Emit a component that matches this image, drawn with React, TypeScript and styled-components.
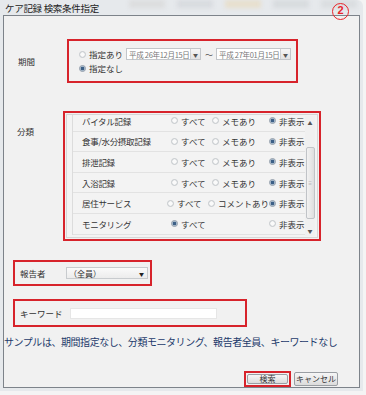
import styled, { createGlobalStyle } from "styled-components"

const GlobalStyle = createGlobalStyle`
  html, body {
    margin: 0;
    padding: 0;
    background: #f4f4f4;
  }
  body {
    font-family: "Noto Sans CJK JP", "Noto Sans", sans-serif;
  }
`

const Window = styled.div`
  width: 363px;
  height: 391px;
  box-sizing: border-box;
  padding: 0 3px 3px 3px;
  background: #e6e9ec;
  border-radius: 0 6px 0 0;
  display: flex;
  flex-direction: column;
`

const TitleBar = styled.div`
  height: 18px;
  display: flex;
  align-items: center;
  position: relative;
`

const Title = styled.div`
  font-size: 9.5px;
  color: #222;
  padding-left: 2px;
  white-space: nowrap;
  letter-spacing: -0.3px;
`

const Tabs = styled.div`
  display: flex;
  gap: 12px;
  margin-left: 30px;
  align-self: flex-start;
  height: 8px;
  overflow: hidden;
  filter: blur(2px);
`

const Tab = styled.div<{ $tone: string }>`
  width: 36px;
  height: 8px;
  background: ${(p) => p.$tone};
  opacity: 0.7;
`

const Badge = styled.div`
  position: absolute;
  right: 11px;
  top: 3px;
  width: 17px;
  height: 17px;
  box-sizing: border-box;
  border: 1.8px solid #e8242a;
  border-radius: 50%;
  color: #e8242a;
  font-family: "Liberation Sans", sans-serif;
  font-weight: bold;
  font-size: 11px;
  line-height: 13.5px;
  text-align: center;
  z-index: 1;
`

const Client = styled.div`
  flex: 1;
  background: #f1f1f1;
  border: 1px solid #7d838a;
  display: flex;
  flex-direction: column;
`

const Row = styled.div<{ $top: number; $align?: string }>`
  display: flex;
  align-items: ${(p) => p.$align || "center"};
  margin-top: ${(p) => p.$top}px;
`

const SideLabel = styled.div<{ $w: number; $pad: number; $pt?: number }>`
  width: ${(p) => p.$w}px;
  padding-left: ${(p) => p.$pad}px;
  padding-top: ${(p) => p.$pt || 0}px;
  box-sizing: border-box;
  font-size: 8.5px;
  color: #333;
  flex-shrink: 0;
`

const RedBox = styled.div<{ $w: number; $h: number }>`
  width: ${(p) => p.$w}px;
  height: ${(p) => p.$h}px;
  box-sizing: border-box;
  border: 2px solid #d7232b;
  display: flex;
`

const PeriodBox = styled(RedBox)`
  flex-direction: column;
  justify-content: center;
  padding-left: 10px;
  gap: 2px;
`

const Line = styled.div`
  display: flex;
  align-items: center;
  height: 12px;
`

const Radio = styled.span<{ $on?: boolean }>`
  width: 7px;
  height: 7px;
  border-radius: 50%;
  box-sizing: border-box;
  border: 1px solid ${(p) => (p.$on ? "#8e9aa8" : "#c4c8cc")};
  background: ${(p) =>
    p.$on
      ? "radial-gradient(circle, #3c5f86 0 1.6px, #9fb4c8 2px, #e6ebf0 3px)"
      : "radial-gradient(circle, #fafafa 0 1.5px, #e2e4e6 3px)"};
  flex-shrink: 0;
`

const Choice = styled.label<{ $w?: number }>`
  display: flex;
  align-items: center;
  gap: 3px;
  width: ${(p) => (p.$w ? `${p.$w}px` : "auto")};
  font-size: 8.5px;
  color: #333;
  white-space: nowrap;
  flex-shrink: 0;
`

const Combo = styled.div<{ $w: number; $ml?: number }>`
  width: ${(p) => p.$w}px;
  margin-left: ${(p) => p.$ml || 0}px;
  height: 12px;
  box-sizing: border-box;
  border: 1px solid #c3c6ca;
  background: #fff;
  display: flex;
  align-items: center;
  font-size: 7.5px;
  color: #777;
  padding-left: 2px;
  white-space: nowrap;
  flex-shrink: 0;
`

const ComboText = styled.span`
  flex: 1;
  overflow: hidden;
  letter-spacing: -0.3px;
`

const ComboArrow = styled.span`
  width: 9px;
  height: 10px;
  border-left: 1px solid #cfd2d5;
  background: linear-gradient(#f6f6f6, #e2e2e2);
  font-size: 5px;
  color: #555;
  display: flex;
  align-items: center;
  justify-content: center;
`

const Tilde = styled.span`
  font-size: 8px;
  color: #555;
  margin: 0 3px 0 4px;
`

const ListBox = styled(RedBox)`
  padding: 1px;
`

const ListPanel = styled.div`
  flex: 1;
  border: 1px solid #d6d6d6;
  background: #f3f3f3;
  display: flex;
  overflow: hidden;
`

const ListScroll = styled.div`
  flex: 1;
  overflow: hidden;
  padding-left: 5px;
`

const ListInner = styled.div`
  margin-top: -4px;
  border-left: 1px solid #dcdcdc;
`

const ListRow = styled.div`
  height: 20.6px;
  display: flex;
  align-items: center;
  border-bottom: 1px solid #e2e2e2;
  box-sizing: border-box;
  padding-left: 9px;
`

const RowName = styled.div`
  width: 89px;
  font-size: 8.5px;
  color: #333;
  white-space: nowrap;
  letter-spacing: -0.3px;
`

const Spacer = styled.div`
  flex: 1;
`

const ScrollBar = styled.div`
  width: 10px;
  margin: 1px 2px 1px 0;
  display: flex;
  flex-direction: column;
  align-items: center;
  background: #f0f0f0;
`

const ScrollArrow = styled.div`
  height: 12px;
  font-size: 5px;
  color: #555;
  display: flex;
  align-items: center;
`

const Thumb = styled.div`
  width: 9px;
  height: 72px;
  margin-top: 19px;
  border: 1px solid #c0c3c7;
  border-radius: 2px;
  box-sizing: border-box;
  background: linear-gradient(90deg, #f2f2f2, #dedede);
  display: flex;
  align-items: center;
  justify-content: center;
  font-size: 4px;
  color: #888;
`

const FieldBox = styled(RedBox)`
  align-items: center;
  padding-left: 3px;
  margin-left: 9px;
`

const Select = styled.div`
  width: 82px;
  height: 12px;
  box-sizing: border-box;
  border: 1px solid #c8cbce;
  background: linear-gradient(#fafafa, #ececec);
  display: flex;
  align-items: center;
  font-size: 8px;
  color: #333;
  padding-left: 2px;
`

const SelectText = styled.span`
  flex: 1;
`

const SelectArrow = styled.span`
  font-size: 5px;
  color: #222;
  margin-right: 3px;
`

const TextInput = styled.div`
  width: 147px;
  height: 11px;
  background: #fff;
  border: 1px solid #e6e6e6;
  box-sizing: border-box;
`

const Note = styled.div`
  margin-top: 7px;
  font-size: 10px;
  letter-spacing: -0.45px;
  color: #1d3a6b;
  white-space: nowrap;
`

const ButtonBar = styled.div`
  display: flex;
  justify-content: flex-end;
  align-items: center;
  gap: 3px;
  margin-top: 22px;
  padding-right: 21px;
`

const Focus = styled.div`
  border: 2px solid #d7232b;
  padding: 1px;
  display: flex;
`

const Button = styled.button<{ $w: number; $h: number }>`
  width: ${(p) => p.$w}px;
  height: ${(p) => p.$h}px;
  padding: 0;
  border: 1px solid #9a9ea3;
  border-radius: 2px;
  background: linear-gradient(#f6f6f6, #dcdcdc);
  font-family: inherit;
  font-size: 8px;
  color: #333;
  line-height: 1;
  display: flex;
  align-items: center;
  justify-content: center;
`

type Cat = { name: string; memo?: string; all?: boolean }

const cats: Cat[] = [
  { name: "バイタル記録", memo: "メモあり" },
  { name: "食事/水分摂取記録", memo: "メモあり" },
  { name: "排泄記録", memo: "メモあり" },
  { name: "入浴記録", memo: "メモあり" },
  { name: "居住サービス", memo: "コメントあり" },
  { name: "モニタリング", all: true },
]

export default function App() {
  return (
    <>
      <GlobalStyle />
      <Window>
        <TitleBar>
          <Title>ケア記録 検索条件指定</Title>
          <Tabs>
            <Tab $tone="#d9d9d9" />
            <Tab $tone="#d3d6da" />
            <Tab $tone="#e8dcc0" />
            <Tab $tone="#d2d5d8" />
            <Tab $tone="#d6d8db" />
          </Tabs>
          <Badge>2</Badge>
        </TitleBar>
        <Client>
          <Row $top={23}>
            <SideLabel $w={63} $pad={14}>期間</SideLabel>
            <PeriodBox $w={231} $h={44}>
              <Line>
                <Choice>
                  <Radio />
                  指定あり
                </Choice>
                <Combo $w={75} $ml={3}>
                  <ComboText>平成 26年12月15日</ComboText>
                  <ComboArrow>▼</ComboArrow>
                </Combo>
                <Tilde>～</Tilde>
                <Combo $w={75}>
                  <ComboText>平成 27年01月15日</ComboText>
                  <ComboArrow>▼</ComboArrow>
                </Combo>
              </Line>
              <Line>
                <Choice>
                  <Radio $on />
                  指定なし
                </Choice>
              </Line>
            </PeriodBox>
          </Row>

          <Row $top={28} $align="flex-start">
            <SideLabel $w={59} $pad={13} $pt={14}>分類</SideLabel>
            <ListBox $w={258} $h={130}>
              <ListPanel>
                <ListScroll>
                  <ListInner>
                    {cats.map((c) => (
                      <ListRow key={c.name}>
                        <RowName>{c.name}</RowName>
                        <Choice $w={41}>
                          <Radio $on={c.all} />
                          すべて
                        </Choice>
                        {c.memo && (
                          <Choice>
                            <Radio />
                            {c.memo}
                          </Choice>
                        )}
                        <Spacer />
                        <Choice $w={36}>
                          <Radio $on={!c.all} />
                          非表示
                        </Choice>
                      </ListRow>
                    ))}
                  </ListInner>
                </ListScroll>
                <ScrollBar>
                  <ScrollArrow>▲</ScrollArrow>
                  <Thumb>≡</Thumb>
                  <Spacer />
                  <ScrollArrow>▼</ScrollArrow>
                </ScrollBar>
              </ListPanel>
            </ListBox>
          </Row>

          <Row $top={19}>
            <FieldBox $w={139} $h={26}>
              <SideLabel $w={48} $pad={2}>報告者</SideLabel>
              <Select>
                <SelectText>（全員）</SelectText>
                <SelectArrow>▼</SelectArrow>
              </Select>
            </FieldBox>
          </Row>

          <Row $top={13}>
            <FieldBox $w={234} $h={28}>
              <SideLabel $w={52} $pad={2}>キーワード</SideLabel>
              <TextInput />
            </FieldBox>
          </Row>

          <Note>サンプルは、期間指定なし、分類モニタリング、報告者全員、キーワードなし</Note>

          <ButtonBar>
            <Focus>
              <Button $w={41} $h={10}>検索</Button>
            </Focus>
            <Button $w={44} $h={14}>キャンセル</Button>
          </ButtonBar>
        </Client>
      </Window>
    </>
  )
}
